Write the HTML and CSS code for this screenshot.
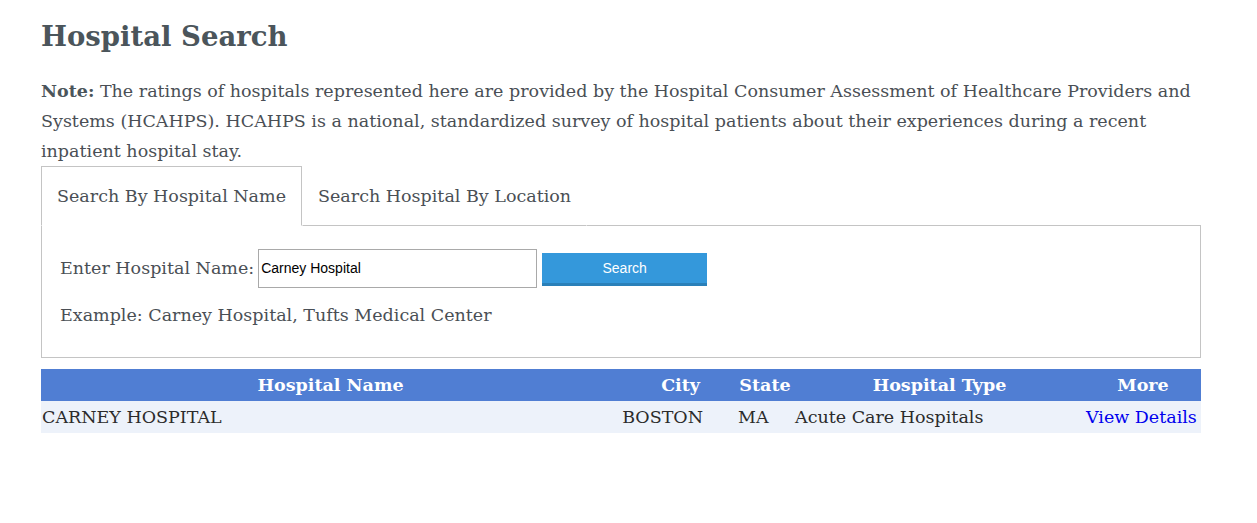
FILE: index.html
```html
<!DOCTYPE html>
<html>
<head>
<meta charset="utf-8">
<link rel="stylesheet" href="styles.css">
</head>
<body>
<div class="page">
  <h1 class="title">Hospital Search</h1>
  <p class="note"><b>Note:</b> The ratings of hospitals represented here are provided by the Hospital Consumer Assessment of Healthcare Providers and Systems (HCAHPS). HCAHPS is a national, standardized survey of hospital patients about their experiences during a recent inpatient hospital stay.</p>
  <div class="tabs">
    <div class="tab active">Search By Hospital Name</div>
    <div class="tab">Search Hospital By Location</div>
    <div class="tab-fill"></div>
  </div>
  <div class="panel">
    <div class="form-row">
      <label class="lbl">Enter Hospital Name:</label>
      <input class="field" type="text" value="Carney Hospital">
      <button class="btn">Search</button>
    </div>
    <div class="example">Example: Carney Hospital, Tufts Medical Center</div>
  </div>
  <table class="results">
    <colgroup>
      <col class="c1"><col class="c2"><col class="c3"><col class="c4"><col class="c5">
    </colgroup>
    <thead>
      <tr><th>Hospital Name</th><th>City</th><th>State</th><th>Hospital Type</th><th>More</th></tr>
    </thead>
    <tbody>
      <tr><td>CARNEY HOSPITAL</td><td>BOSTON</td><td>MA</td><td>Acute Care Hospitals</td><td><a href="#">View Details</a></td></tr>
    </tbody>
  </table>
</div>
</body>
</html>
```

FILE: styles.css
```css
html, body {
  margin: 0;
  padding: 0;
  background: #ffffff;
}
body {
  font-family: "DejaVu Serif", Georgia, serif;
  color: #4a4f55;
}
.page {
  width: 1160px;
  margin-left: 41px;
  padding-top: 14px;
}
.title {
  margin: 0;
  font-size: 27.5px;
  line-height: 44px;
  font-weight: bold;
  color: #4b555b;
}
.note {
  margin: 18px 0 0 0;
  font-size: 17.5px;
  line-height: 30px;
  color: #4a4f55;
}
.note b {
  color: #4b555b;
}
.tabs {
  display: flex;
  height: 60px;
}
.tab {
  box-sizing: border-box;
  font-size: 17.5px;
  padding: 0 15px 0 15px;
  display: flex;
  align-items: center;
  height: 60px;
  border: 1px solid transparent;
  border-bottom: 1px solid #c4c4c4;
  color: #4a4f55;
}
.tab.active {
  border: 1px solid #c4c4c4;
  border-bottom: 1px solid #ffffff;
}
.tab-fill {
  flex: 1;
  border-bottom: 1px solid #c4c4c4;
}
.panel {
  border: 1px solid #c4c4c4;
  border-top: none;
  height: 132px;
  padding: 0 18px;
  box-sizing: border-box;
}
.form-row {
  display: flex;
  align-items: center;
  padding-top: 22px;
  height: 40px;
}
.lbl {
  font-size: 17.5px;
  margin-right: 4px;
}
.field {
  width: 279px;
  height: 39px;
  box-sizing: border-box;
  border: 1px solid #a9a9a9;
  padding: 0 2px;
  font-family: "Liberation Sans", Arial, sans-serif;
  font-size: 14px;
  color: #000;
  margin: 0;
}
.btn {
  width: 165px;
  height: 33px;
  margin-left: 5px;
  margin-top: 2px;
  border: none;
  border-bottom: 3px solid #2a80b9;
  background: #3498db;
  color: #ffffff;
  font-family: "Liberation Sans", Arial, sans-serif;
  font-size: 14px;
  padding: 0;
}
.example {
  font-size: 17.5px;
  margin-top: 17px;
}
.results {
  margin-top: 11px;
  width: 1160px;
  border-collapse: collapse;
  table-layout: fixed;
  font-size: 17.5px;
}
.c1 { width: 579px; }
.c2 { width: 116px; }
.c3 { width: 58px; }
.c4 { width: 291px; }
.c5 { width: 116px; }
.results th {
  background: #507ed3;
  color: #ffffff;
  font-weight: bold;
  height: 32px;
  padding: 0 1px;
  text-align: center;
}
.results th:nth-child(2) {
  text-align: right;
  padding-right: 36px;
}
.results td {
  background: #edf2fa;
  color: #2b2b2b;
  height: 32px;
  padding: 0 1px;
  white-space: nowrap;
}
.results td:nth-child(2) {
  text-align: right;
  padding-right: 33px;
}
.results td:nth-child(3) {
  padding-left: 2px;
}
.results a {
  color: #0000ee;
  text-decoration: none;
}
```
